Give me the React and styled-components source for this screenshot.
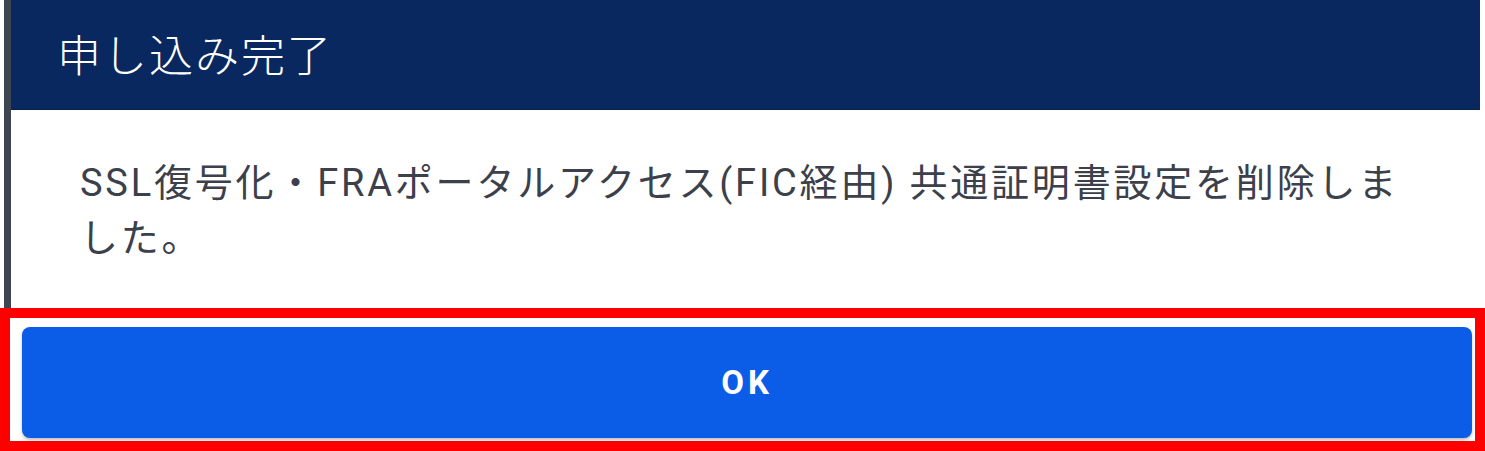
import styled, { createGlobalStyle } from "styled-components";

const GlobalStyle = createGlobalStyle`
  html, body {
    margin: 0;
    padding: 0;
    background: #ffffff;
    font-family: Roboto, "Noto Sans CJK JP", sans-serif;
  }
`;

const Page = styled.div`
  width: 1485px;
  height: 451px;
  overflow: hidden;
  display: flex;
  flex-direction: column;
`;

const Top = styled.div`
  display: flex;
  height: 308px;
  padding-left: 4px;
  padding-right: 5px;
`;

const EdgeStrip = styled.div`
  width: 7px;
  background: #3d4452;
  flex: none;
`;

const Dialog = styled.div`
  flex: 1;
  display: flex;
  flex-direction: column;
  background: #ffffff;
`;

const Header = styled.div`
  height: 110px;
  box-sizing: border-box;
  display: flex;
  align-items: center;
  padding: 0 0 4px 46px;
  background: #0a2860;
  border-bottom: 1px solid #06204f;
  color: #ffffff;
  font-family: "Noto Sans CJK JP", sans-serif;
  font-weight: 300;
  font-size: 44px;
  letter-spacing: 2px;
`;

const Body = styled.div`
  padding: 46px 69px 0 69px;
  color: #3b404b;
  font-size: 38px;
  line-height: 55px;
  letter-spacing: 2.8px;
`;

const Highlight = styled.div`
  flex: 1;
  border: 10px solid #ff0000;
  background: #ffffff;
  display: flex;
  padding: 9px 3px 3px 12px;
`;

const OkButton = styled.button`
  flex: 1;
  border: none;
  border-radius: 8px;
  background: #0b5ce6;
  box-shadow: 0 2px 3px rgba(0, 0, 0, 0.25);
  color: #ffffff;
  font-family: Roboto, sans-serif;
  font-weight: 700;
  font-size: 33px;
  letter-spacing: 4px;
  cursor: pointer;
`;

export default function App() {
  return (
    <Page>
      <GlobalStyle />
      <Top>
        <EdgeStrip />
        <Dialog>
          <Header>申し込み完了</Header>
          <Body>
            SSL復号化・FRAポータルアクセス(FIC経由) 共通証明書設定を削除しました。
          </Body>
        </Dialog>
      </Top>
      <Highlight>
        <OkButton>OK</OkButton>
      </Highlight>
    </Page>
  );
}
